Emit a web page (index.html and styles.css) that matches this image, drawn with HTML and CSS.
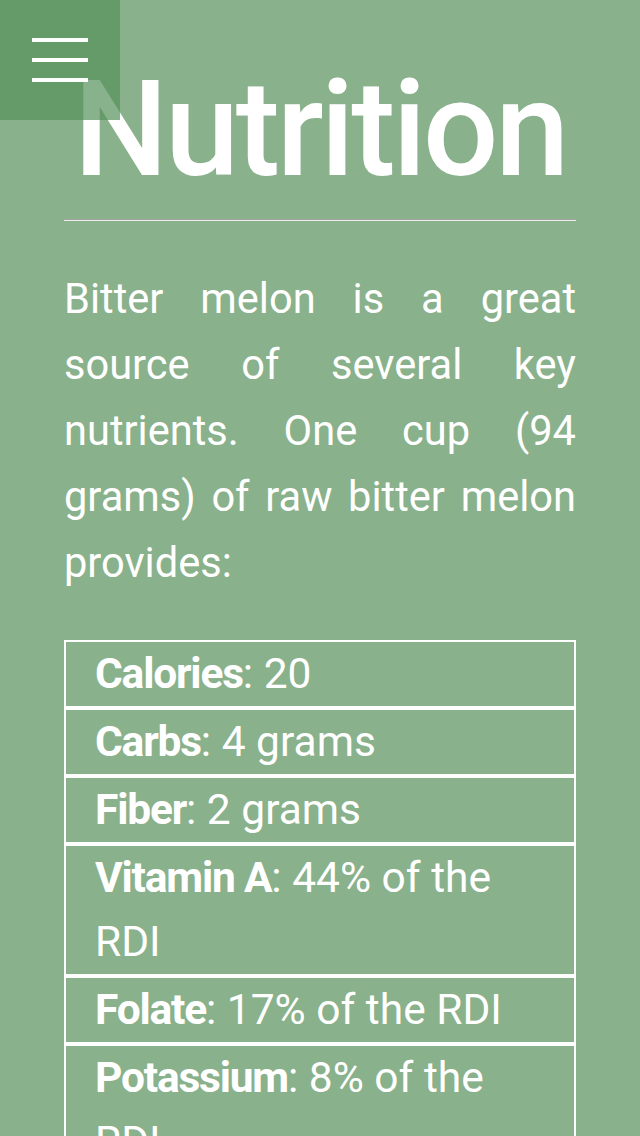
FILE: index.html
```html
<!DOCTYPE html>
<html lang="en">
<head>
<meta charset="utf-8">
<title>Nutrition</title>
<link rel="stylesheet" href="styles.css">
</head>
<body>
<div class="menu-button" aria-label="Menu">
  <span class="bar"></span>
  <span class="bar"></span>
  <span class="bar"></span>
</div>
<main class="content">
  <h1 class="title">Nutrition</h1>
  <hr class="rule">
  <p class="intro">Bitter melon is a great source of several key nutrients. One cup (94 grams) of raw bitter melon provides:</p>
  <ul class="facts">
    <li><strong>Calories</strong>: 20</li>
    <li><strong>Carbs</strong>: 4 grams</li>
    <li><strong>Fiber</strong>: 2 grams</li>
    <li><strong>Vitamin A</strong>: 44% of the RDI</li>
    <li><strong>Folate</strong>: 17% of the RDI</li>
    <li><strong>Potassium</strong>: 8% of the RDI</li>
    <li><strong>Zinc</strong>: 5% of the RDI</li>
    <li><strong>Iron</strong>: 4% of the RDI</li>
  </ul>
</main>
</body>
</html>
```
FILE: styles.css
```css
html, body {
  margin: 0;
  padding: 0;
}
body {
  background: #89b18b;
  color: #ffffff;
  font-family: Roboto, "Liberation Sans", sans-serif;
}
.menu-button {
  position: fixed;
  top: 0;
  left: 0;
  width: 120px;
  height: 120px;
  box-sizing: border-box;
  padding-top: 38px;
  padding-left: 32px;
  background: rgba(85, 145, 90, 0.7);
  display: flex;
  flex-direction: column;
  gap: 16px;
  z-index: 10;
}
.bar {
  display: block;
  width: 56px;
  height: 4px;
  background: #ffffff;
}
.content {
  padding: 0 64px;
}
.title {
  margin: 0;
  padding-top: 54px;
  font-size: 133px;
  font-weight: 500;
  line-height: 152px;
  text-align: center;
  letter-spacing: -3.2px;
}
.rule {
  margin: 13px 0 0;
  height: 0;
  border: 0;
  border-top: 1px solid #a3a3a3;
  border-bottom: 1px solid #ececec;
}
.intro {
  margin: 45px 0 0;
  font-size: 41.6px;
  line-height: 66px;
  text-align: justify;
}
.facts {
  list-style: none;
  margin: 44px 0 0;
  padding: 0;
}
.facts li {
  border: 2px solid #ffffff;
  padding: 0 29px;
  font-size: 42.5px;
  line-height: 64px;
}
.facts strong {
  font-weight: 700;
  letter-spacing: -1.2px;
}
```
